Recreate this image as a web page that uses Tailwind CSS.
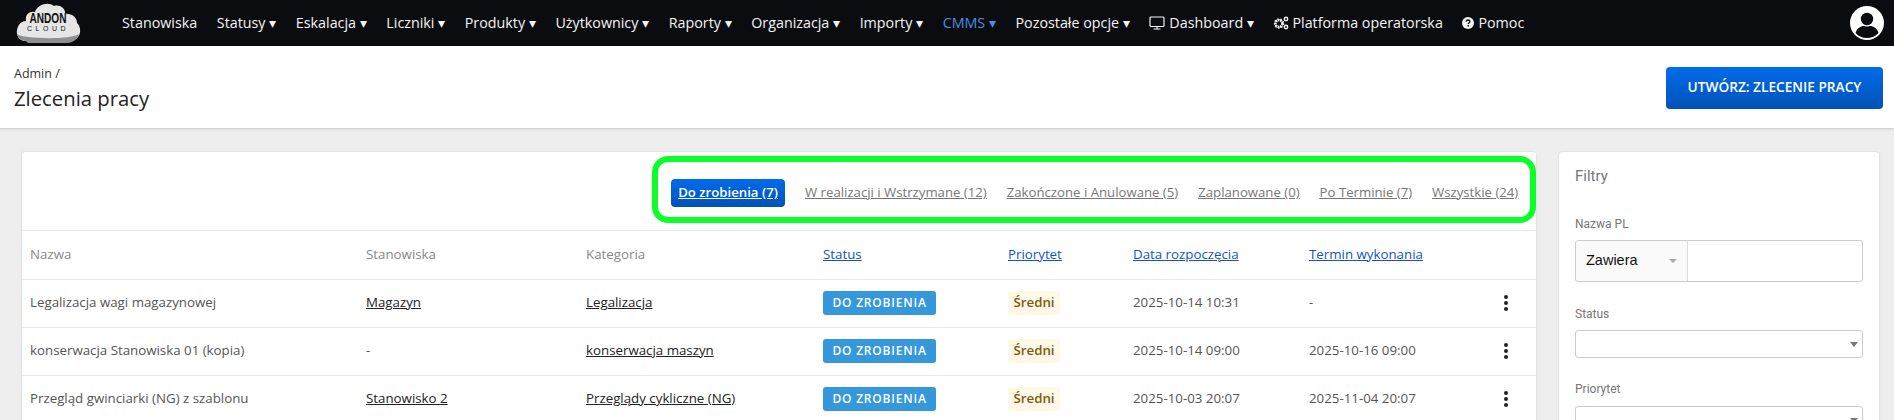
<!DOCTYPE html>
<html lang="pl">

<head>
    <meta charset="UTF-8">
    <title>Zlecenia pracy</title>
    <script src="https://cdn.jsdelivr.net/npm/@tailwindcss/browser@4"></script>
</head>

<body class="h-[420px] overflow-hidden bg-[#eeeeee] font-['Open_Sans',sans-serif]">
    <!-- top nav -->
    <nav class="h-[46px] bg-[#0b0c10] flex items-center text-[14.3px] text-[#f4f4f4] relative">
        <svg class="ml-[16px] w-[65px] h-[42px] shrink-0" viewBox="0 0 65 42">
            <path d="M10 39 C3 39 0 33 1 28 C2 22 6 19 10 19 C9 13 13 9 19 10 C21 3 32 -1 38 4 C44 2 50 7 49 12 C55 11 61 15 61 21 C65 24 65 32 62 35 C59 39 55 39 52 39 Z" fill="#e6e6e6" />
            <path d="M10 39 C5 39 2 36 1 32 C6 37 55 38 63 32 C62 37 56 41 52 41 L12 41 Z" fill="#8f8f8f" />
        </svg>
        <div class="absolute left-[18px] top-[13px] w-[60px] text-center text-[#111] font-['Liberation_Sans',sans-serif] leading-none">
            <div class="text-[14px] leading-[11px] font-bold [transform:scaleX(0.72)] whitespace-nowrap">ANDON</div>
            <div class="text-[7px] leading-[7px] tracking-[3.5px] mt-[1px] whitespace-nowrap">CLOUD</div>
        </div>
        <div class="ml-[41px] flex items-center gap-[19.6px] whitespace-nowrap">
            <a>Stanowiska</a>
            <a>Statusy ▾</a>
            <a>Eskalacja ▾</a>
            <a>Liczniki ▾</a>
            <a>Produkty ▾</a>
            <a>Użytkownicy ▾</a>
            <a>Raporty ▾</a>
            <a>Organizacja ▾</a>
            <a>Importy ▾</a>
            <a class="text-[#4a90e2]">CMMS ▾</a>
            <a>Pozostałe opcje ▾</a>
            <a class="flex items-center gap-[4px]">
                <svg class="w-[16px] h-[14px]" viewBox="0 0 16 14" fill="none" stroke="#f4f4f4" stroke-width="1.2"><rect x="1" y="1" width="14" height="9.5" rx="1" /><path d="M4.5 13h7M8 10.5V13" /></svg>
                Dashboard ▾
            </a>
            <a class="flex items-center gap-[3px]">
                <svg class="w-[16px] h-[14px]" viewBox="0 0 16 14" fill="#f4f4f4"><circle cx="6" cy="7.5" r="3.4" fill="none" stroke="#f4f4f4" stroke-width="2.4" stroke-dasharray="1.8 0.6" /><circle cx="6" cy="7.5" r="4.6" fill="none" stroke="#f4f4f4" stroke-width="1.2" stroke-dasharray="1.6 1.6" /><circle cx="13" cy="3" r="1.7" fill="none" stroke="#f4f4f4" stroke-width="1.4" /><circle cx="13" cy="11" r="1.7" fill="none" stroke="#f4f4f4" stroke-width="1.4" /></svg>
                Platforma operatorska
            </a>
            <a class="flex items-center gap-[4px]">
                <svg class="w-[12px] h-[12px]" viewBox="0 0 12 12"><circle cx="6" cy="6" r="6" fill="#f4f4f4" /><path d="M4.1 4.6C4.2 3.5 5 3 6 3c1.1 0 1.9.6 1.9 1.5 0 1.3-1.7 1.3-1.7 2.6" fill="none" stroke="#0b0c10" stroke-width="1.3" /><rect x="5.4" y="8" width="1.5" height="1.5" fill="#0b0c10" /></svg>
                Pomoc
            </a>
        </div>
        <svg class="ml-auto mr-[10px] w-[34px] h-[34px]" viewBox="0 0 34 34">
            <circle cx="17" cy="17" r="17" fill="#fff" />
            <circle cx="17" cy="13" r="6.2" fill="#0b0c10" />
            <path d="M5.5 27c1.5-5 5.500-7 8-7 1.500 0 2 .6 3.500.6s2-.6 3.500-.6c2.500 0 6.500 2 8 7-3 3.500-7 5-11.500 5s-8.500-1.500-11.500-5z" fill="#0b0c10" />
        </svg>
    </nav>

    <!-- page header -->
    <header class="h-[83px] bg-white border-b border-[#d4d4d4] shadow-[0_1px_2px_rgba(0,0,0,0.08)] flex items-center justify-between pl-[14px] pr-[11px]">
        <div class="pt-[2px]">
            <div class="text-[12.5px] leading-[16px] text-[#333]">Admin /</div>
            <h1 class="text-[20.3px] leading-[26px] mt-[3px] text-[#222]">Zlecenia pracy</h1>
        </div>
        <button class="h-[42px] w-[217px] mt-[1px] rounded-[4px] bg-gradient-to-b from-[#006ceb] to-[#0052b6] text-white text-[13.7px] font-semibold">UTWÓRZ: ZLECENIE PRACY</button>
    </header>

    <main class="h-[291px] overflow-hidden flex items-start pt-[23px] pl-[22px] pr-[15px] gap-[23px]">
        <!-- work orders -->
        <section class="w-[1514px] bg-white rounded-[3px] shadow-[0_0_2px_rgba(0,0,0,0.18)]">
            <div class="h-[79px] border-b border-[#eaeaea] flex justify-end pt-[4px]">
                <div class="w-[884px] h-[67px] border-[6px] border-[#0cff2a] rounded-[16px] flex items-center gap-[20px] pl-[13px] pt-[6px] text-[13.2px] text-[#777] underline whitespace-nowrap">
                    <a class="h-[28px] w-[114px] flex items-center justify-center rounded-[4px] bg-gradient-to-b from-[#006ceb] to-[#0052b6] text-white font-semibold">Do zrobienia (7)</a>
                    <a>W realizacji i Wstrzymane (12)</a>
                    <a>Zakończone i Anulowane (5)</a>
                    <a>Zaplanowane (0)</a>
                    <a>Po Terminie (7)</a>
                    <a>Wszystkie (24)</a>
                </div>
            </div>
            <table class="w-full table-fixed text-[13.3px] text-[#555] text-left">
                <colgroup>
                    <col class="w-[344px]">
                    <col class="w-[220px]">
                    <col class="w-[237px]">
                    <col class="w-[185px]">
                    <col class="w-[125px]">
                    <col class="w-[176px]">
                    <col class="w-[227px]">
                </colgroup>
                <thead class="text-[#888]">
                    <tr class="h-[48px] border-b border-[#eaeaea]">
                        <th class="font-normal pl-[8px]">Nazwa</th>
                        <th class="font-normal">Stanowiska</th>
                        <th class="font-normal">Kategoria</th>
                        <th class="font-normal text-[#1254c8] underline">Status</th>
                        <th class="font-normal text-[#1254c8] underline">Priorytet</th>
                        <th class="font-normal text-[#1254c8] underline">Data rozpoczęcia</th>
                        <th class="font-normal text-[#1254c8] underline">Termin wykonania</th>
                    </tr>
                </thead>
                <tbody>
                    <tr class="h-[48px] border-b border-[#eaeaea]">
                        <td class="pl-[8px]">Legalizacja wagi magazynowej</td>
                        <td class="text-[#222] underline">Magazyn</td>
                        <td class="text-[#222] underline">Legalizacja</td>
                        <td><span class="flex items-center justify-center h-[24px] w-[113px] rounded-[3px] bg-[#3498db] text-[12px] text-white font-semibold tracking-[0.8px]">DO ZROBIENIA</span></td>
                        <td><span class="flex items-center justify-center h-[24px] w-[52px] rounded-[3px] bg-[#fff8e6] text-[#7a5a12] font-semibold">Średni</span></td>
                        <td>2025-10-14 10:31</td>
                        <td>
                            <div class="flex items-center justify-between pr-[28px]">-
                                <svg class="w-[4px] h-[16px]" viewBox="0 0 4 16" fill="#222"><circle cx="2" cy="2" r="2" /><circle cx="2" cy="8" r="2" /><circle cx="2" cy="14" r="2" /></svg>
                            </div>
                        </td>
                    </tr>
                    <tr class="h-[48px] border-b border-[#eaeaea]">
                        <td class="pl-[8px]">konserwacja Stanowiska 01 (kopia)</td>
                        <td>-</td>
                        <td class="text-[#222] underline">konserwacja maszyn</td>
                        <td><span class="flex items-center justify-center h-[24px] w-[113px] rounded-[3px] bg-[#3498db] text-[12px] text-white font-semibold tracking-[0.8px]">DO ZROBIENIA</span></td>
                        <td><span class="flex items-center justify-center h-[24px] w-[52px] rounded-[3px] bg-[#fff8e6] text-[#7a5a12] font-semibold">Średni</span></td>
                        <td>2025-10-14 09:00</td>
                        <td>
                            <div class="flex items-center justify-between pr-[28px]">2025-10-16 09:00
                                <svg class="w-[4px] h-[16px]" viewBox="0 0 4 16" fill="#222"><circle cx="2" cy="2" r="2" /><circle cx="2" cy="8" r="2" /><circle cx="2" cy="14" r="2" /></svg>
                            </div>
                        </td>
                    </tr>
                    <tr class="h-[48px] border-b border-[#eaeaea]">
                        <td class="pl-[8px]">Przegląd gwinciarki (NG) z szablonu</td>
                        <td class="text-[#222] underline">Stanowisko 2</td>
                        <td class="text-[#222] underline">Przeglądy cykliczne (NG)</td>
                        <td><span class="flex items-center justify-center h-[24px] w-[113px] rounded-[3px] bg-[#3498db] text-[12px] text-white font-semibold tracking-[0.8px]">DO ZROBIENIA</span></td>
                        <td><span class="flex items-center justify-center h-[24px] w-[52px] rounded-[3px] bg-[#fff8e6] text-[#7a5a12] font-semibold">Średni</span></td>
                        <td>2025-10-03 20:07</td>
                        <td>
                            <div class="flex items-center justify-between pr-[28px]">2025-11-04 20:07
                                <svg class="w-[4px] h-[16px]" viewBox="0 0 4 16" fill="#222"><circle cx="2" cy="2" r="2" /><circle cx="2" cy="8" r="2" /><circle cx="2" cy="14" r="2" /></svg>
                            </div>
                        </td>
                    </tr>
                </tbody>
            </table>
        </section>

        <!-- filters -->
        <aside class="w-[320px] h-[400px] bg-white rounded-[3px] shadow-[0_0_2px_rgba(0,0,0,0.18)] px-[16px] font-['Roboto',sans-serif] text-[#777]">
            <h2 class="text-[15px] leading-[20px] mt-[14px]">Filtry</h2>
            <div class="text-[12px] leading-[16px] mt-[30px]">Nazwa PL</div>
            <div class="mt-[8px] h-[42px] flex border border-[#ccc] rounded-[3px]">
                <div class="w-[112px] bg-[#fafafa] border-r border-[#ddd] rounded-l-[3px] flex items-center justify-between pl-[10px] pr-[10px] font-['Liberation_Sans',sans-serif] text-[14.5px] text-[#111]">
                    Zawiera
                    <span class="w-0 h-0 border-x-[4px] border-x-transparent border-t-[4px] border-t-[#aaa]"></span>
                </div>
            </div>
            <div class="text-[12px] leading-[16px] mt-[24px]">Status</div>
            <div class="mt-[8px] h-[28px] flex items-center justify-end pr-[4px] border border-[#ccc] rounded-[3px]">
                <span class="w-0 h-0 border-x-[4px] border-x-transparent border-t-[5px] border-t-[#777]"></span>
            </div>
            <div class="text-[12px] leading-[16px] mt-[23px]">Priorytet</div>
            <div class="mt-[9px] h-[28px] flex items-center justify-end pr-[4px] border border-[#ccc] rounded-[3px]">
                <span class="w-0 h-0 border-x-[4px] border-x-transparent border-t-[5px] border-t-[#777]"></span>
            </div>
        </aside>
    </main>
</body>

</html>
